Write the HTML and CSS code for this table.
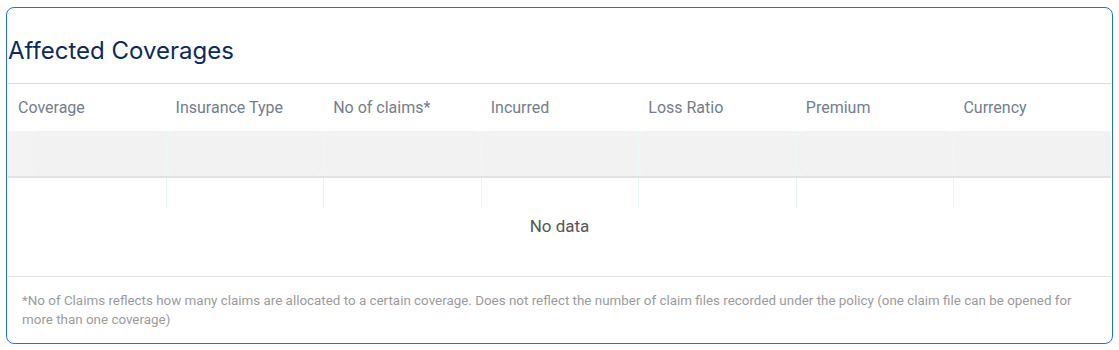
FILE: index.html
```html
<!DOCTYPE html>
<html lang="en">
<head>
    <meta charset="UTF-8">
    <meta name="viewport" content="width=device-width, initial-scale=1.0">
    <title>Affected Coverages</title>
    <link rel="stylesheet" href="styles.css">
</head>
<body>
    <div class="card">
        <h2 class="card-title">Affected Coverages</h2>
        <div class="table">
            <div class="row head">
                <div class="cell">Coverage</div>
                <div class="cell">Insurance Type</div>
                <div class="cell">No of claims*</div>
                <div class="cell">Incurred</div>
                <div class="cell">Loss Ratio</div>
                <div class="cell">Premium</div>
                <div class="cell">Currency</div>
            </div>
            <div class="row skeleton">
                <div class="cell"><span class="bone"></span></div>
                <div class="cell"><span class="bone"></span></div>
                <div class="cell"><span class="bone"></span></div>
                <div class="cell"><span class="bone"></span></div>
                <div class="cell"><span class="bone"></span></div>
                <div class="cell"><span class="bone"></span></div>
                <div class="cell"><span class="bone"></span></div>
            </div>
            <div class="row guides">
                <div class="cell"></div>
                <div class="cell"></div>
                <div class="cell"></div>
                <div class="cell"></div>
                <div class="cell"></div>
                <div class="cell"></div>
                <div class="cell"></div>
            </div>
            <div class="empty">No data</div>
        </div>
        <p class="note">*No of Claims reflects how many claims are allocated to a certain coverage. Does not reflect the number of claim files recorded under the policy (one claim file can be opened for more than one coverage)</p>
    </div>
</body>
</html>
```

FILE: styles.css
```css
body {
    margin: 0;
    padding: 7px 6px 6px 6px;
    background: #fff;
    font-family: Roboto, "Liberation Sans", sans-serif;
}
.card {
    border: 1px solid #1f6fef;
    border-radius: 8px;
    padding: 0 1px;
    height: 337px;
    box-sizing: border-box;
    width: 1107px;
}
.card-title {
    margin: 0;
    padding: 27px 0 0 0;
    height: 48px;
    font-family: Inter, Roboto, sans-serif;
    font-weight: 400;
    font-size: 24px;
    line-height: 32px;
    color: #0e2a5c;
    border-bottom: 1px solid #dcdcdc;
}
.table {
    border-bottom: 1px solid #e2e2e2;
}
.row {
    display: grid;
    grid-template-columns: repeat(7, 1fr);
}
.head {
    height: 47px;
    align-items: center;
}
.head .cell {
    padding-left: 10px;
    font-size: 16px;
    color: #737d8e;
}
.skeleton {
    height: 45px;
    background: #f3f3f3;
    border-bottom: 2px solid #e2e2e2;
}
.skeleton .cell {
    border-left: 1px solid #eaf6f8;
    padding: 0 2px;
    display: flex;
}
.skeleton .cell:first-child {
    border-left: none;
    padding-left: 25px;
}
.bone {
    flex: 1;
    border-radius: 10px;
    background: #f2f2f2;
    box-shadow: 0 0 0 1px #f0f0f0 inset;
}
.guides {
    height: 30px;
}
.guides .cell {
    border-left: 1px solid #e8f5f7;
}
.guides .cell:first-child {
    border-left: none;
}
.empty {
    height: 68px;
    text-align: center;
    font-size: 17px;
    line-height: 36px;
    color: #555;
}
.note {
    margin: 0;
    padding: 14px 30px 0 14px;
    font-size: 13.4px;
    line-height: 19px;
    color: #9b9b9b;
}
```
